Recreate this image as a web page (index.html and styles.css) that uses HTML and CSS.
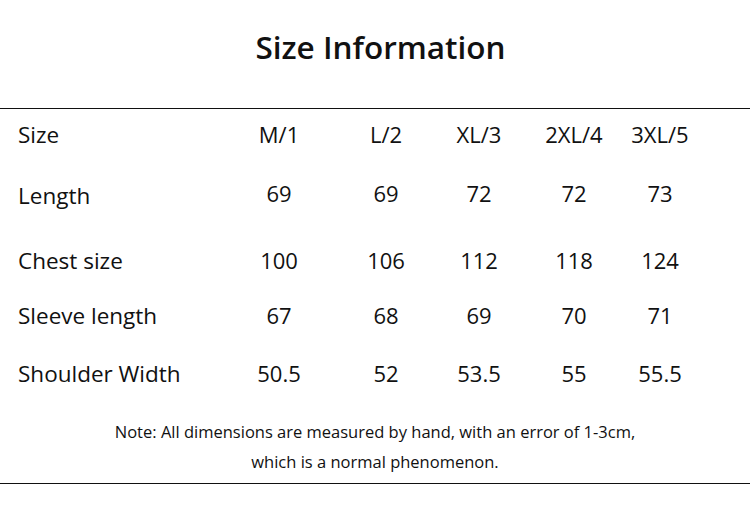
FILE: index.html
```html
<!DOCTYPE html>
<html lang="en">
<head>
    <meta charset="UTF-8">
    <meta name="viewport" content="width=device-width, initial-scale=1.0">
    <title>Size Information</title>
    <link rel="stylesheet" href="styles.css">
</head>
<body>
    <header class="title">
        <h1>Size Information</h1>
    </header>

    <section class="size-table">
        <div class="row row-head">
            <span class="label">Size</span>
            <span>M/1</span>
            <span>L/2</span>
            <span>XL/3</span>
            <span>2XL/4</span>
            <span>3XL/5</span>
        </div>
        <div class="row row-length">
            <span class="label">Length</span>
            <span>69</span>
            <span>69</span>
            <span>72</span>
            <span>72</span>
            <span>73</span>
        </div>
        <div class="row row-chest">
            <span class="label">Chest size</span>
            <span>100</span>
            <span>106</span>
            <span>112</span>
            <span>118</span>
            <span>124</span>
        </div>
        <div class="row row-sleeve">
            <span class="label">Sleeve length</span>
            <span>67</span>
            <span>68</span>
            <span>69</span>
            <span>70</span>
            <span>71</span>
        </div>
        <div class="row row-shoulder">
            <span class="label">Shoulder Width</span>
            <span>50.5</span>
            <span>52</span>
            <span>53.5</span>
            <span>55</span>
            <span>55.5</span>
        </div>
    </section>

    <footer class="note">
        <p>Note: All dimensions are measured by hand, with an error of 1-3cm,</p>
        <p>which is a normal phenomenon.</p>
    </footer>
</body>
</html>
```

FILE: styles.css
```css
* {
    margin: 0;
    padding: 0;
    box-sizing: border-box;
}

body {
    font-family: "Open Sans", "Noto Sans", sans-serif;
    background-color: #fff;
    color: #111;
    width: 750px;
    height: 516px;
    overflow: hidden;
}

.title {
    height: 109px;
    border-bottom: 1px solid #111;
    text-align: center;
    padding-top: 25px;
    padding-left: 11px;
}

.title h1 {
    font-size: 31.5px;
    font-weight: 600;
    line-height: 44px;
}

.size-table {
    display: grid;
    grid-template-rows: 50px 68px 66px 44px 72px;
}

.row {
    display: grid;
    grid-template-columns: 226px 106px 108px 78px 112px 60px;
    align-items: center;
    font-size: 22px;
    text-align: center;
}

.row .label {
    text-align: left;
    padding-left: 18px;
    font-size: 22.5px;
}

.row-length .label {
    padding-top: 4px;
}

.note {
    text-align: center;
    font-size: 16.5px;
    line-height: 30px;
    padding-top: 8px;
    height: 75px;
    border-bottom: 1px solid #111;
}
```
